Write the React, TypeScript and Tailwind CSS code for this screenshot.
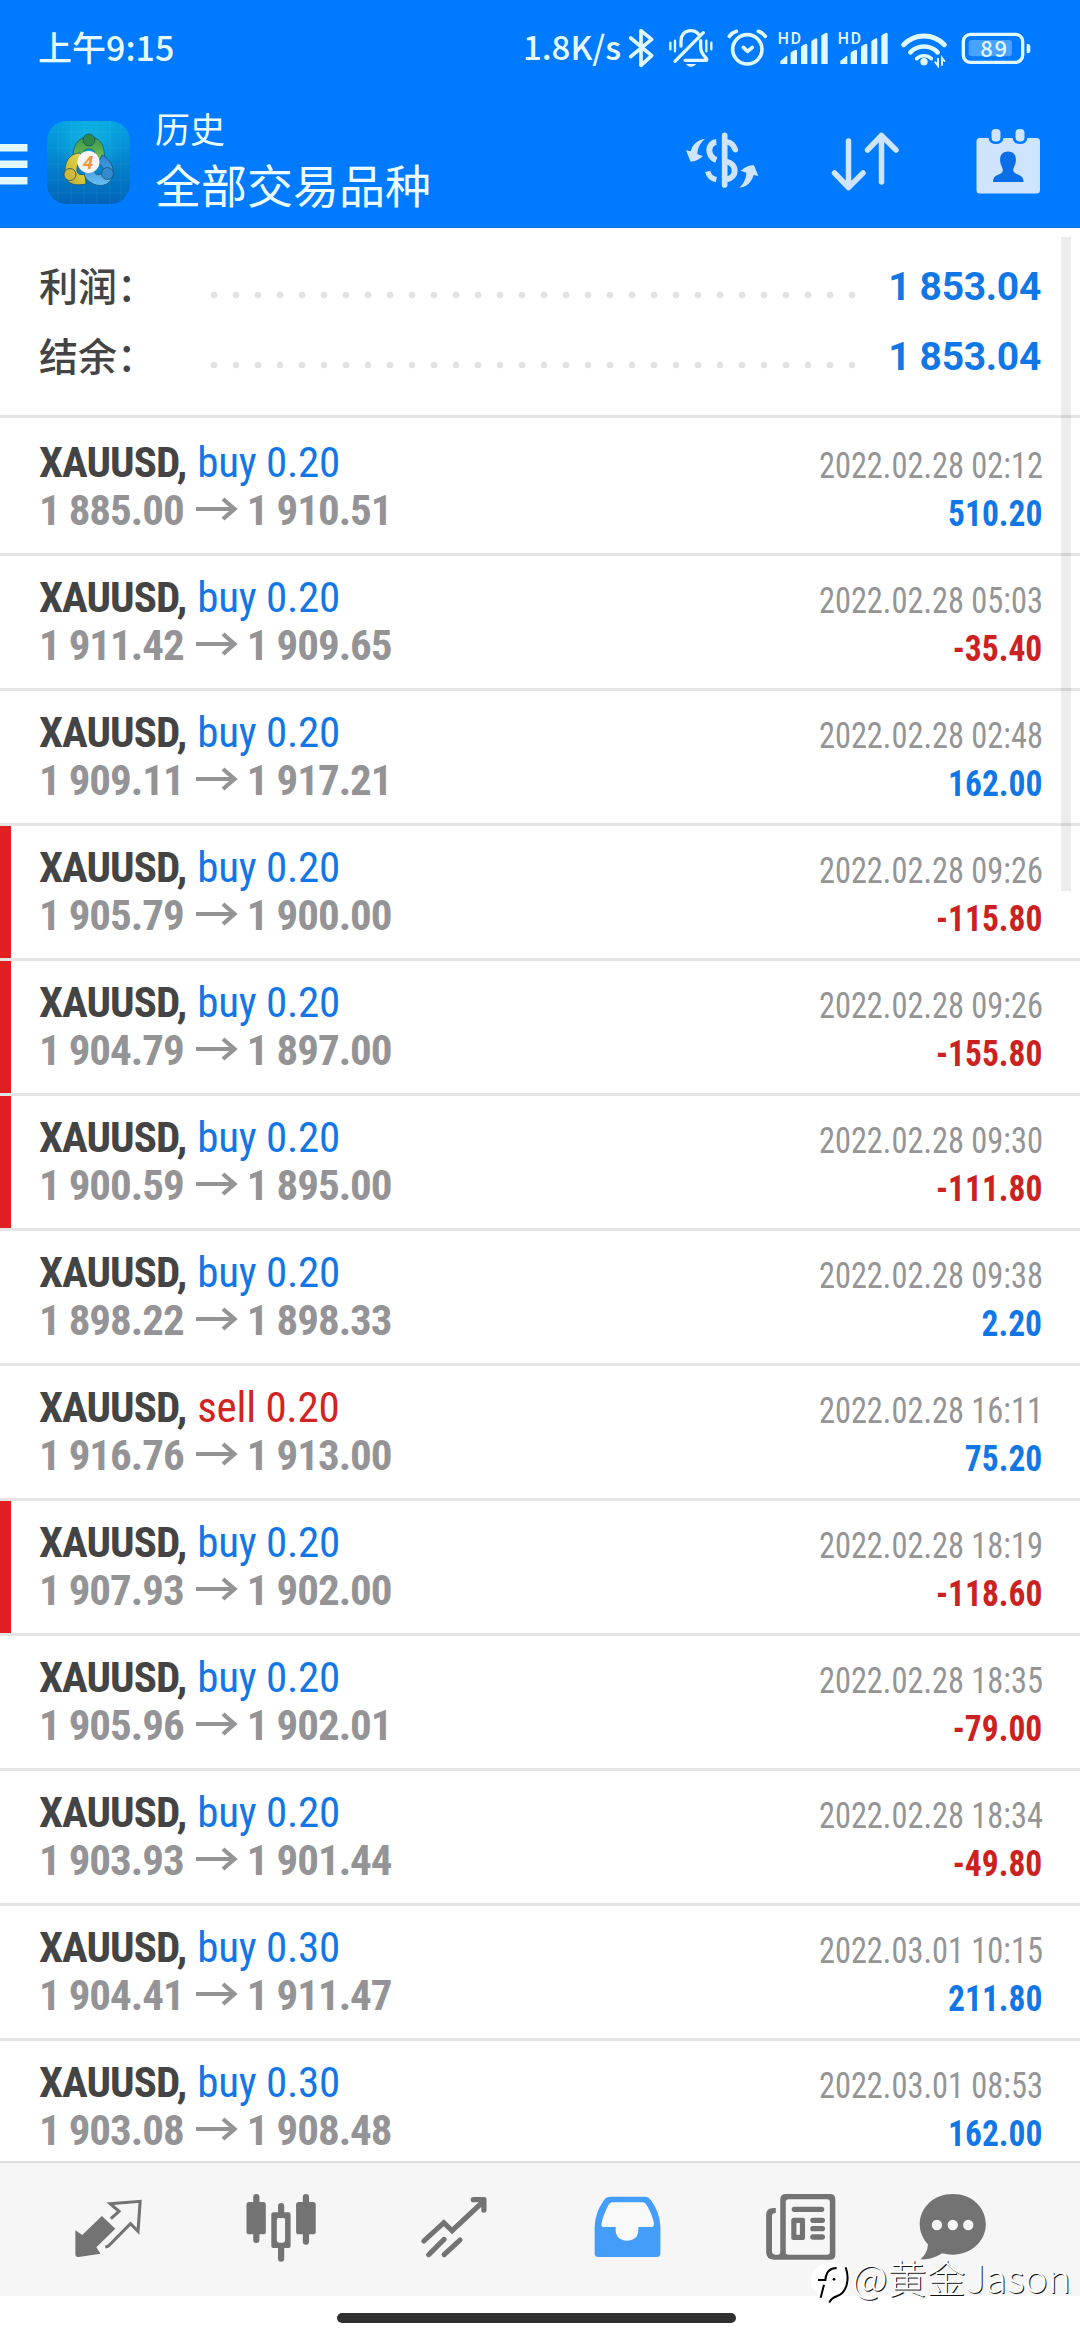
import type { ReactNode } from 'react';

type Deal = {
  side: 'buy' | 'sell';
  lots: string;
  open: string;
  close: string;
  time: string;
  profit: string;
  stopped?: boolean;
};

const deals: Deal[] = [
  { side: 'buy', lots: '0.20', open: '1 885.00', close: '1 910.51', time: '2022.02.28 02:12', profit: '510.20' },
  { side: 'buy', lots: '0.20', open: '1 911.42', close: '1 909.65', time: '2022.02.28 05:03', profit: '-35.40' },
  { side: 'buy', lots: '0.20', open: '1 909.11', close: '1 917.21', time: '2022.02.28 02:48', profit: '162.00' },
  { side: 'buy', lots: '0.20', open: '1 905.79', close: '1 900.00', time: '2022.02.28 09:26', profit: '-115.80', stopped: true },
  { side: 'buy', lots: '0.20', open: '1 904.79', close: '1 897.00', time: '2022.02.28 09:26', profit: '-155.80', stopped: true },
  { side: 'buy', lots: '0.20', open: '1 900.59', close: '1 895.00', time: '2022.02.28 09:30', profit: '-111.80', stopped: true },
  { side: 'buy', lots: '0.20', open: '1 898.22', close: '1 898.33', time: '2022.02.28 09:38', profit: '2.20' },
  { side: 'sell', lots: '0.20', open: '1 916.76', close: '1 913.00', time: '2022.02.28 16:11', profit: '75.20' },
  { side: 'buy', lots: '0.20', open: '1 907.93', close: '1 902.00', time: '2022.02.28 18:19', profit: '-118.60', stopped: true },
  { side: 'buy', lots: '0.20', open: '1 905.96', close: '1 902.01', time: '2022.02.28 18:35', profit: '-79.00' },
  { side: 'buy', lots: '0.20', open: '1 903.93', close: '1 901.44', time: '2022.02.28 18:34', profit: '-49.80' },
  { side: 'buy', lots: '0.30', open: '1 904.41', close: '1 911.47', time: '2022.03.01 10:15', profit: '211.80' },
  { side: 'buy', lots: '0.30', open: '1 903.08', close: '1 908.48', time: '2022.03.01 08:53', profit: '162.00' },
];

function Signal() {
  return (
    <svg className="h-[55px] w-[60px]" viewBox="366 0 180 165" fill="#e0f8ff">
      <text x="380" y="71" fontFamily="Roboto, sans-serif" fontWeight="500" fontSize="47" textLength="70">HD</text>
      <path d="M388 131v-8l18-15h3v24h-18q-3 0-3-1z" />
      <path d="M419 132V98q4-5 15-9q4 0 4 4v39z" />
      <path d="M450 132V80q4-5 14-9q5 0 5 4v57z" />
      <path d="M481 132V64q4-5 14-9q4 0 4 4v73z" />
      <path d="M511 132V47q4-5 14-9q5 0 5 4v90z" />
    </svg>
  );
}

function StatusBar() {
  return (
    <div className="flex h-[98px] items-start pl-[38px] font-['Noto_Sans_CJK_SC',sans-serif] font-medium text-[#e6fbff]">
      <span className="text-[34px] leading-[93px]">上午9:15</span>
      <div className="ml-auto flex pr-[46px]">
        <span className="text-[33px] leading-[93px]">1.8K/s</span>
        <svg className="mt-[20px] h-[55px] w-[41px]" viewBox="0 0 123 165" fill="none" stroke="#e0f8ff" strokeWidth="11" strokeLinejoin="round" strokeLinecap="round">
          <path d="M29 54L92 107L60 136V32L92 58L29 110" />
        </svg>
        <svg className="mt-[20px] h-[55px] w-[59px]" viewBox="33 0 177 165" fill="none" stroke="#e0f8ff" strokeWidth="10" strokeLinecap="round" strokeLinejoin="round">
          <path d="M90 78V64C90 26 132 26 142 42M72 124L157 38M149 62V82C149 96 156 106 167 116V121H102" />
          <path d="M58 68V88M72 62V94M166 62V94M181 68V88" strokeWidth="7" />
          <path d="M104 132H136Q120 150 104 132Z" fill="#e0f8ff" stroke="none" />
        </svg>
        <svg className="mt-[20px] h-[55px] w-[52px]" viewBox="210 0 156 165" fill="none" stroke="#e0f8ff" strokeWidth="11" strokeLinecap="round" strokeLinejoin="round">
          <circle cx="289" cy="88" r="44" />
          <path d="M235 49Q243 38 256 34M343 49Q335 38 322 34" />
          <path d="M277 82L290 94L304 82" />
        </svg>
        <div className="mt-[20px] flex"><Signal /><Signal /></div>
        <svg className="mt-[20px] h-[55px] w-[61px]" viewBox="0 0 183 165" fill="none" stroke="#e0f8ff" strokeLinecap="round">
          <path d="M32 74A84 84 0 0 1 154 74" strokeWidth="15" />
          <path d="M52 97A57 57 0 0 1 134 97" strokeWidth="14" />
          <path d="M71 116A32 32 0 0 1 115 116" strokeWidth="11" />
          <circle cx="93" cy="125" r="11" fill="#e0f8ff" stroke="none" />
          <path d="M135 116V137L127 127M147 135V114L154 123" strokeWidth="6" />
        </svg>
        <svg className="mt-[20px] h-[55px] w-[80px]" viewBox="0 0 240 165" fill="#e0f8ff">
          <rect x="28" y="43" width="178" height="84" rx="21" fill="none" stroke="#e0f8ff" strokeWidth="10" />
          <rect x="44" y="60" width="130" height="49" rx="9" fillOpacity=".32" />
          <path d="M218 71q11 0 11 8v13q0 8-11 8z" />
          <text x="79" y="110" fontFamily="Noto Sans CJK SC, sans-serif" fontSize="66" fontWeight="500" textLength="80">89</text>
        </svg>
      </div>
    </div>
  );
}

function AppLogo() {
  return (
    <svg className="ml-[19px] mt-[23px] size-[83px]" viewBox="0 0 83 83">
      <defs>
        <linearGradient id="tile" x1="0" y1="0" x2="0" y2="1">
          <stop offset="0" stopColor="#06a4e2" />
          <stop offset="1" stopColor="#0263b8" />
        </linearGradient>
        <radialGradient id="glow">
          <stop offset="0" stopColor="#18c4e4" stopOpacity=".7" />
          <stop offset="1" stopColor="#18c4e4" stopOpacity="0" />
        </radialGradient>
        <linearGradient id="leaf" x1="0" y1="0" x2="0" y2="1">
          <stop offset="0" stopColor="#3e9646" />
          <stop offset="1" stopColor="#77c45c" />
        </linearGradient>
        <linearGradient id="gold" x1="1" y1="0" x2="0" y2="1">
          <stop offset="0" stopColor="#eee04e" />
          <stop offset="1" stopColor="#b8ab2e" />
        </linearGradient>
        <linearGradient id="sky" x1="0" y1="0" x2="0" y2="1">
          <stop offset="0" stopColor="#2a7fcd" />
          <stop offset="1" stopColor="#69c0f2" />
        </linearGradient>
      </defs>
      <rect width="83" height="83" rx="20" fill="url(#tile)" />
      <circle cx="42" cy="22" r="34" fill="url(#glow)" />
      <path d="M11 3V80M24 0V83M37 0V83M50 0V83M63 0V83M74 3V80M3 11H80M0 27H83M0 43H83M0 59H83M3 72H80" stroke="#5cc6ef" strokeOpacity=".14" />
      <g stroke="#15566f" strokeWidth=".8">
        <path d="M26 41C25 24 31 16 42 16S59 24 57 41L48 40C49 31 47 28 42 28S34 32 35 39Z" fill="url(#leaf)" />
        <path d="M33 32C22 32 17 42 18 53S29 65 39 63L38 53C32 55 29 52 30 47S33 41 37 41Z" fill="url(#gold)" />
        <path d="M55 34C65 39 68 49 65 57S51 67 43 61C38 58 37 54 37 50L47 49C48 54 52 55 55 52S56 45 51 42Z" fill="url(#sky)" />
        <circle cx="42" cy="19" r="6" fill="#2f8848" />
        <circle cx="23" cy="53.5" r="6" fill="#d2b93a" />
        <circle cx="60.500" cy="52.500" r="6" fill="#348bd0" />
      </g>
      <circle cx="41.500" cy="41" r="11" fill="#f4f4f2" />
      <text x="41" y="48" textAnchor="middle" fontFamily="Roboto, sans-serif" fontStyle="italic" fontWeight="700" fontSize="19" fill="#f3943f">4</text>
    </svg>
  );
}

function AppBar() {
  return (
    <div className="flex h-[130px] items-start border-b border-[#1467cf]">
      <svg className="mt-[45px] h-[42px] w-[28px]" viewBox="0 0 28 42" fill="#e0f8ff">
        <path d="M0 1H27.500V8.500H0zM0 17.500H27.500V25H0zM0 34H27.500V41.500H0z" />
      </svg>
      <AppLogo />
      <div className="ml-[25px] mt-[5px] font-['Noto_Sans_CJK_SC',sans-serif] text-[#ebfdff]">
        <div className="text-[35px] leading-[50px]">历史</div>
        <div className="text-[46px] leading-[60px]">全部交易品种</div>
      </div>
      <div className="ml-auto mr-[35px] mt-[22px] flex">
        <svg className="h-[90px] w-[100px]" viewBox="0 0 300 270" fill="#cfe4ff">
          <path d="M134 46V195" stroke="#cfe4ff" strokeWidth="17" strokeLinecap="round" />
          <path d="M109 66C84 68 78 108 109 120" fill="none" stroke="#cfe4ff" strokeWidth="18" />
          <path d="M142 66C155 67 160 76 166 89" fill="none" stroke="#cfe4ff" strokeWidth="17" strokeLinecap="round" />
          <path d="M140 125C172 132 172 172 140 178" fill="none" stroke="#cfe4ff" strokeWidth="18" />
          <path d="M83 154C86 166 96 176 109 179" fill="none" stroke="#cfe4ff" strokeWidth="16" />
          <path d="M76 56C54 58 37 73 32 94L18 91L31 124Q44 128 69 109L52 102C53 83 62 66 76 56Z" />
          <path d="M178 203C200 201 214 188 221 165L235 168L222 136Q205 134 182 152L199 158C199 175 190 192 178 203Z" />
        </svg>
        <svg className="ml-[45px] h-[90px] w-[80px]" viewBox="825 120 80 90" fill="none" stroke="#cfe4ff" strokeWidth="5.500" strokeLinecap="round" strokeLinejoin="round">
          <path d="M848.500 141V187M834.500 173L848.500 187.500L863 173" />
          <path d="M881.500 182V136M867.500 150L881.500 135.500L896 150" />
        </svg>
        <svg className="ml-[65px] h-[90px] w-[75px]" viewBox="970 120 75 90" fill="#cfe4ff">
          <path d="M979.500 138H988.500Q989.500 144 996 144T1003.500 138H1012.500Q1013.500 144 1020 144T1027.500 138H1036.500Q1040 138 1040 141.500V190Q1040 193.500 1036.500 193.500H979.500Q976.500 193.500 976.500 190V141.500Q976.500 138 979.500 138Z" />
          <rect x="991.500" y="129" width="9" height="12.500" rx="4" />
          <rect x="1015.500" y="129" width="9" height="12.500" rx="4" />
          <path d="M1008 151.500C1017 151.500 1017 161 1014.500 166C1012 171 1013 173 1019 175Q1023.500 176.500 1023.500 182H993Q993 176.500 997.500 175C1003 173 1004 171 1001.500 166C999 161 999 151.500 1008 151.500Z" fill="#0a6fe6" />
        </svg>
      </div>
    </div>
  );
}

function SummaryRow({ label, value }: { label: string; value: string }) {
  return (
    <div className="flex h-[70px] items-center">
      <span className="w-[164px] pb-[3px] font-['Noto_Sans_CJK_SC',sans-serif] text-[39px] font-medium leading-[67px] text-[#444]">{label}</span>
      <div className="mt-[17px] h-[8px] w-[660px] bg-[radial-gradient(circle,#e2e2e2_3px,transparent_3.7px)] bg-[length:22px_8px]" />
      <span className="ml-auto pt-[2px] font-['Roboto',sans-serif] text-[39px] font-bold tracking-[-0.3px] text-[#1277e6]">{value}</span>
    </div>
  );
}

function DealRow({ deal, first }: { deal: Deal; first: boolean }) {
  const loss = deal.profit.startsWith('-');
  return (
    <div className={`flex shrink-0 border-b-[3px] border-[#e4e4e4] ${first ? 'h-[138px] pt-[3px]' : 'h-[135px]'}`}>
      <div className={`h-full w-[11px] ${deal.stopped ? 'bg-[#e02020]' : ''}`} />
      <div className="ml-[28px] pt-[17px] font-['Roboto_Condensed',sans-serif] text-[43px] leading-[48px]">
        <div className="flex whitespace-pre">
          <span className="font-bold tracking-[-0.95px] text-[#444]">XAUUSD, </span>
          <span className={`ml-[2px] tracking-[-0.25px] ${deal.side === 'buy' ? 'text-[#1277e6]' : 'text-[#d32323]'}`}>
            {deal.side} {deal.lots}
          </span>
        </div>
        <div className="flex items-center font-bold tracking-[-1px] text-[#949497]">
          <span>{deal.open}</span>
          <svg className="ml-[12px] mr-[9px] mt-[-2px] h-[24px] w-[42px]" viewBox="0 0 42 24" fill="none" stroke="#949497" strokeWidth="4.200">
            <path d="M0 12H39M27 2L38.500 12L27 22" />
          </svg>
          <span>{deal.close}</span>
        </div>
      </div>
      <div className="ml-auto flex flex-col items-end pr-[37.5px] pt-[21px] font-['Roboto_Condensed',sans-serif] text-[36px] leading-[48px]">
        <span className="origin-right scale-x-[0.9] text-[#959595]">{deal.time}</span>
        <span className={`origin-right scale-x-[0.93] font-bold ${loss ? 'text-[#cc2121]' : 'text-[#1277e6]'}`}>{deal.profit}</span>
      </div>
    </div>
  );
}

function NavItem({ box, children }: { box: string; children: ReactNode }) {
  return (
    <svg className="h-[133px] w-[173px]" viewBox={box} preserveAspectRatio="none" fill="#737373">
      {children}
    </svg>
  );
}

function BottomNav() {
  return (
    <div className="flex h-[135px] shrink-0 border-t-2 border-[#dedede] bg-[#f6f6f6] pl-[22px]">
      <NavItem box="64 69 502.400 399">
        <path d="M296 228L335 266L280 322L292 341L228 351Q219 352 219 343V271L239 285Z" />
        <path d="M322 236L346 214L320 191L407 184L401 274L379 251L318 315Q314 320 306 321" fill="none" stroke="#737373" strokeWidth="9" />
      </NavItem>
      <NavItem box="566.400 69 502.400 399">
        <rect x="716" y="186" width="56" height="97" rx="8" />
        <path d="M744.500 171V300M888.500 171V305M816.500 198V226M816.500 320V356" stroke="#737373" strokeWidth="18" strokeLinecap="round" />
        <rect x="860" y="186" width="57" height="97" rx="8" />
        <path d="M796 217H838Q844 217 844 223V318Q844 324 838 324H794Q788 324 788 318V223Q788 217 796 217ZM811 233Q804 233 804 240V301Q804 308 811 308H821Q828 308 828 301V240Q828 233 821 233Z" fillRule="evenodd" />
      </NavItem>
      <NavItem box="1068.800 69 502.400 399">
        <path d="M1231 303L1289 248L1313 272L1404 184M1245 344L1290 298M1290 344L1336 300" fill="none" stroke="#737373" strokeWidth="15" strokeLinecap="round" />
        <path d="M1375 171H1407Q1413 171 1413 177V211Q1413 218 1405 218T1398 211V187H1375Q1367 187 1367 179T1375 171Z" />
      </NavItem>
      <NavItem box="3.200 69 502.400 399">
        <path d="M206 170H304Q316 170 322 180Q350 220 350 262V340Q350 351 339 351H170Q159 351 159 340V262Q159 220 186 180Q192 170 206 170Z" fill="#449df9" />
        <path d="M211 187H298Q306 187 310 195Q327 225 331 250Q332 261 325 261H286V271C286 313 220 313 220 271V261H184Q178 261 179 250Q184 225 199 195Q203 187 211 187Z" fill="#f9f9f9" />
      </NavItem>
      <NavItem box="505.600 69 502.400 399">
        <path d="M716 162H842Q858 162 858 178V344Q858 359 842 359H680Q657 359 657 337V225Q657 204 678 204H685V219Q674 219 674 228V334Q674 344 684 344H692Q698 344 698 337V178Q698 162 716 162ZM722 178Q714 178 714 186V336Q714 344 722 344H834Q842 344 842 336V186Q842 178 834 178Z" fillRule="evenodd" />
        <path d="M739 208H818M793 241H820M793 266H820M793 291H820" stroke="#737373" strokeWidth="16" strokeLinecap="round" />
        <path d="M738 233H764Q770 233 770 239V294Q770 300 764 300H736Q730 300 730 294V241Q730 233 738 233ZM745 249V284H755V249Z" fillRule="evenodd" />
      </NavItem>
      <NavItem box="1008 69 502.400 399">
        <path d="M1199 162C1254 162 1295 202 1295 253S1252 344 1199 344Q1184 344 1168 340C1150 353 1125 360 1105 358Q1126 340 1127 313C1112 297 1103 275 1103 253C1103 202 1145 162 1199 162Z" />
        <g fill="#f6f6f6">
          <ellipse cx="1153" cy="255" rx="15" ry="16" />
          <ellipse cx="1199" cy="255" rx="15" ry="16" />
          <ellipse cx="1244" cy="255" rx="15" ry="16" />
        </g>
      </NavItem>
    </div>
  );
}

function Watermark() {
  return (
    <div className="absolute left-[810px] top-[2250px] flex h-[60px] items-center">
      <svg className="h-[60px] w-[42px] shrink-0" viewBox="30 0 126 180">
        <path d="M95 38C125 38 141 62 141 88C141 122 118 145 90 146C60 147 32 122 32 90C32 60 62 38 95 38Z" fill="#fff" />
        <path d="M137 52C150 88 140 128 112 138C98 143 92 147 88 158" fill="none" stroke="#000" strokeWidth="6" />
        <path d="M54 90H76C78 66 88 54 110 54M72 104L62 143" fill="none" stroke="#000" strokeWidth="6" />
        <circle cx="102" cy="88" r="4" />
      </svg>
      <span className="mt-[-8px] font-['Noto_Sans_CJK_SC',sans-serif] text-[39px] font-light text-white [text-shadow:1px_1px_0_#111]">@黄金Jason</span>
    </div>
  );
}

export default function App() {
  return (
    <div className="relative flex h-[2340px] w-[1080px] flex-col overflow-hidden bg-white">
      <header className="shrink-0 bg-[#007aff]">
        <StatusBar />
        <AppBar />
      </header>
      <main className="flex min-h-0 flex-1 flex-col overflow-hidden">
        <section className="h-[190px] shrink-0 border-b-[3px] border-[#e4e4e4] pl-[39px] pr-[39px] pt-[23px]">
          <SummaryRow label="利润：" value="1 853.04" />
          <SummaryRow label="结余：" value="1 853.04" />
        </section>
        {deals.map((deal, i) => (
          <DealRow key={i} deal={deal} first={i === 0} />
        ))}
      </main>
      <BottomNav />
      <div className="h-[44px] shrink-0 bg-white pl-[337px] pt-[17px]">
        <div className="h-[10px] w-[399px] rounded-full bg-[#303030]" />
      </div>
      <div className="absolute left-[1061px] top-[237px] h-[654px] w-[10px] bg-black/[0.07]" />
      <Watermark />
    </div>
  );
}
